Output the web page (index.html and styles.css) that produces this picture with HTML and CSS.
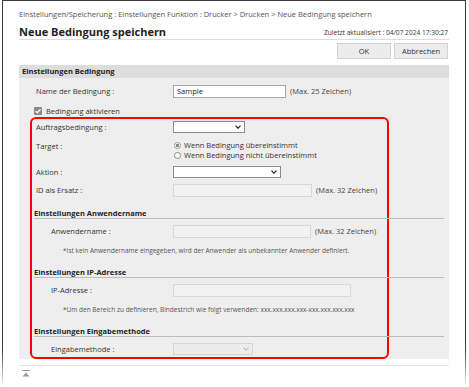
FILE: index.html
```html
<!DOCTYPE html>
<html lang="de">
<head>
    <meta charset="UTF-8">
    <meta name="viewport" content="width=device-width, initial-scale=1.0">
    <title>Neue Bedingung speichern</title>
    <link rel="stylesheet" href="styles.css">
</head>
<body>
    <div class="frame">
        <div class="breadcrumb">Einstellungen/Speicherung : Einstellungen Funktion : Drucker &gt; Drucken &gt; Neue Bedingung speichern</div>
        <div class="title-row">
            <h1>Neue Bedingung speichern</h1>
            <span class="updated">Zuletzt aktualisiert : 04/07 2024 17:30:27</span>
        </div>
        <div class="actions">
            <button class="btn">OK</button>
            <button class="btn">Abbrechen</button>
        </div>

        <div class="panel">
            <div class="panel-head">Einstellungen Bedingung</div>
            <div class="panel-body">
                <div class="row top-row name-row">
                    <span class="label">Name der Bedingung :</span>
                    <span class="input" style="width: 113px">Sample</span>
                    <span class="hint">(Max. 25 Zeichen)</span>
                </div>
                <div class="check-row">
                    <svg class="checkbox" width="8" height="8" viewBox="0 0 8 8">
                        <rect x="0" y="0" width="8" height="8" rx="1" fill="#8a8a8a"/>
                        <path d="M1.6 4.1 L3.3 5.8 L6.5 2.3" fill="none" stroke="#fff" stroke-width="1.3"/>
                    </svg>
                    <span>Bedingung aktivieren</span>
                </div>

                <div class="highlight">
                    <div class="row first">
                        <span class="label">Auftragsbedingung :</span>
                        <span class="select" style="width: 72px">
                            <svg width="6" height="4" viewBox="0 0 6 4"><path d="M0.5 0.7 L3 3.2 L5.5 0.7" fill="none" stroke="#222" stroke-width="1.2"/></svg>
                        </span>
                    </div>
                    <div class="row target-row">
                        <span class="label">Target :</span>
                        <div class="radios">
                            <div class="radio-line"><span class="radio checked"></span>Wenn Bedingung übereinstimmt</div>
                            <div class="radio-line"><span class="radio"></span>Wenn Bedingung nicht übereinstimmt</div>
                        </div>
                    </div>
                    <div class="row action-row">
                        <span class="label">Aktion :</span>
                        <span class="select" style="width: 108px">
                            <svg width="6" height="4" viewBox="0 0 6 4"><path d="M0.5 0.7 L3 3.2 L5.5 0.7" fill="none" stroke="#222" stroke-width="1.2"/></svg>
                        </span>
                    </div>
                    <div class="row id-row">
                        <span class="label">ID als Ersatz :</span>
                        <span class="input disabled" style="width: 139px"></span>
                        <span class="hint">(Max. 32 Zeichen)</span>
                    </div>

                    <div class="section-head">Einstellungen Anwendername</div>
                    <div class="row sub">
                        <span class="label">Anwendername :</span>
                        <span class="input disabled" style="width: 138px"></span>
                        <span class="hint">(Max. 32 Zeichen)</span>
                    </div>
                    <div class="note">*Ist kein Anwendername eingegeben, wird der Anwender als unbekannter Anwender definiert.</div>

                    <div class="section-head">Einstellungen IP-Adresse</div>
                    <div class="row sub">
                        <span class="label">IP-Adresse :</span>
                        <span class="input disabled" style="width: 178px"></span>
                    </div>
                    <div class="note">*Um den Bereich zu definieren, Bindestrich wie folgt verwenden: xxx.xxx.xxx.xxx-xxx.xxx.xxx.xxx</div>

                    <div class="section-head">Einstellungen Eingabemethode</div>
                    <div class="row sub last">
                        <span class="label">Eingabemethode :</span>
                        <span class="select disabled" style="width: 80px">
                            <svg width="6" height="4" viewBox="0 0 6 4"><path d="M0.5 0.7 L3 3.2 L5.5 0.7" fill="none" stroke="#aaa" stroke-width="1"/></svg>
                        </span>
                    </div>
                </div>
            </div>
        </div>

        <div class="footer">
            <svg class="to-top" width="8" height="7" viewBox="0 0 8 7">
                <rect x="0" y="0" width="8" height="1" fill="#9a9a9a"/>
                <path d="M0.5 6.5 L4 2.5 L7.5 6.5 Z" fill="#9a9a9a"/>
            </svg>
        </div>
    </div>
</body>
</html>
```

FILE: styles.css
```css
body {
    margin: 0;
    background-color: #fff;
    font-family: "Open Sans", "Noto Sans", sans-serif;
    font-size: 7.5px;
    color: #333;
}
.frame {
    margin-left: 2px;
    width: 464px;
    min-height: 387px;
    box-sizing: border-box;
    padding: 8px 16px 0 16px;
    border-style: solid;
    border-width: 1px 1px 0 1px;
    border-image: linear-gradient(to bottom, #3c3c3c 0%, #3c3c3c 90%, rgba(60,60,60,0) 100%) 1;
}
.breadcrumb {
    height: 10px;
    line-height: 10px;
    color: #555;
    white-space: nowrap;
}
.title-row {
    display: flex;
    justify-content: space-between;
    align-items: center;
    margin-top: 6px;
    height: 14px;
    border-bottom: 1px solid #dcdcdc;
}
h1 {
    margin: 0;
    font-size: 11px;
    font-weight: bold;
    color: #222;
    line-height: 14px;
}
.updated {
    padding-right: 1px;
    font-size: 6.6px;
    color: #333;
}
.actions {
    display: flex;
    justify-content: flex-end;
    gap: 3px;
    margin-top: 3px;
    padding-right: 1px;
}
.btn {
    width: 54px;
    height: 16px;
    padding: 0;
    border: 1px solid #d2d2d2;
    background-color: #ececec;
    font-family: inherit;
    font-size: 7.5px;
    color: #333;
}
.panel {
    margin-top: 6px;
    background-color: #eeeeee;
}
.panel-head {
    height: 13px;
    line-height: 13px;
    padding-left: 3px;
    background-color: #dddddd;
    font-weight: bold;
    color: #222;
}
.panel-body {
    padding: 4px 0 0 11px;
}
.row {
    display: flex;
    align-items: center;
    height: 14px;
}
.top-row {
    height: 18px;
    padding-left: 6px;
}
.label {
    width: 137px;
    flex-shrink: 0;
    box-sizing: border-box;
}
.input, .select {
    box-sizing: border-box;
    height: 13px;
    line-height: 11px;
    padding-left: 3px;
    background-color: #fff;
    border: 1px solid #a8a8a8;
    color: #222;
}
.input.disabled {
    background-color: #f2f2f2;
    border-color: #d8d8d8;
}
.select {
    display: flex;
    justify-content: flex-end;
    align-items: center;
    padding-right: 3px;
    border-color: #8a8a8a;
    height: 12px;
}
.select.disabled {
    background-color: #ececec;
    border-color: #d6d6d6;
}
.hint {
    margin-left: 4px;
    color: #444;
}
.check-row {
    display: flex;
    align-items: center;
    gap: 4px;
    height: 12px;
    margin-top: 5px;
    padding-left: 4px;
}
.highlight {
    width: 359px;
    box-sizing: border-box;
    border: 2px solid #ff0000;
    border-radius: 6px;
    padding: 1px 0 1px 2px;
}
.highlight .row {
    padding-left: 2px;
}
.target-row {
    align-items: flex-start;
    height: 20px;
    margin-top: 6px;
}
.target-row .label {
    line-height: 10px;
    padding-top: 1px;
}
.radio-line {
    display: flex;
    align-items: center;
    gap: 3px;
    height: 10px;
    line-height: 10px;
}
.radio {
    width: 7px;
    height: 7px;
    margin-left: 1px;
    box-sizing: border-box;
    border: 1px solid #888;
    border-radius: 50%;
    background-color: #fff;
}
.radio.checked {
    border-color: #999;
    background: radial-gradient(circle, #8a8a8a 0 1.7px, #fff 2px);
}
.action-row {
    margin-top: 5px;
}
.id-row {
    margin-top: 4px;
}
.section-head {
    margin-top: 12px;
    margin-right: -57px;
    height: 9px;
    line-height: 9px;
    border-bottom: 1px solid #bdbdbd;
    font-weight: bold;
    color: #222;
}
.highlight .row.sub {
    margin-top: 5px;
    padding-left: 17px;
}
.row.sub .label {
    width: 137px;
    margin-left: -15px;
    padding-left: 15px;
}
.note {
    margin-top: 8px;
    padding-left: 29px;
    height: 10px;
    line-height: 10px;
    font-size: 6.5px;
    color: #555;
}
.footer {
    margin-top: 6px;
    border-top: 1px solid #e6e6e6;
    padding: 4px 0 0 3px;
}
.to-top {
    display: block;
}
```
